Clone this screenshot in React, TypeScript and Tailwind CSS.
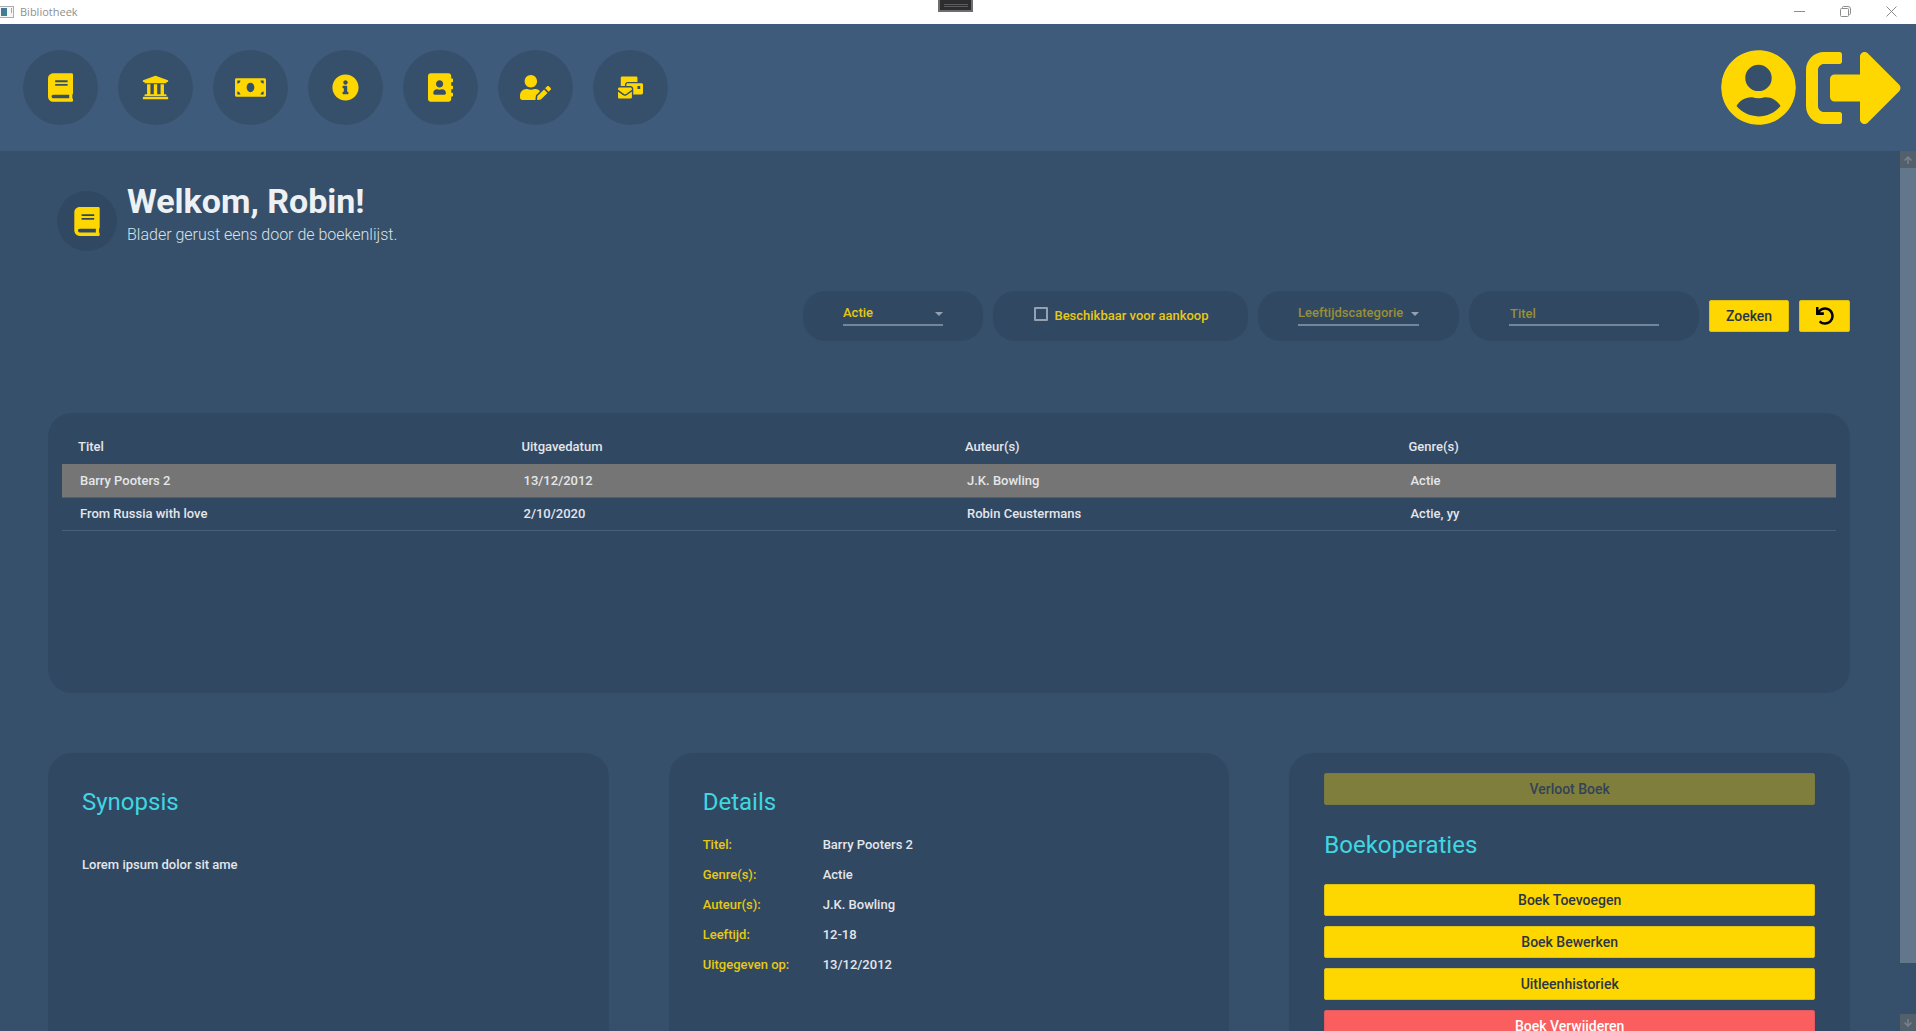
import { useState, type ReactNode } from "react";
import {
  FaAddressBook,
  FaBook,
  FaInfoCircle,
  FaMailBulk,
  FaMoneyBill,
  FaSignOutAlt,
  FaUndo,
  FaUniversity,
  FaUserCircle,
  FaUserEdit,
} from "react-icons/fa";

const navItems = [
  { label: "Boeken", icon: <FaBook className="h-[29px] w-[25px]" /> },
  { label: "Bibliotheek", icon: <FaUniversity className="h-[27px] w-[27px]" /> },
  { label: "Betalingen", icon: <FaMoneyBill className="h-[25px] w-[31px]" /> },
  { label: "Informatie", icon: <FaInfoCircle className="h-[27px] w-[27px]" /> },
  { label: "Contacten", icon: <FaAddressBook className="h-[29px] w-[25px]" /> },
  { label: "Gebruiker bewerken", icon: <FaUserEdit className="h-[25px] w-[31px]" /> },
  { label: "Post", icon: <FaMailBulk className="h-[23px] w-[25px]" /> },
];

const columns = ["Titel", "Uitgavedatum", "Auteur(s)", "Genre(s)"];

const books = [
  ["Barry Pooters 2", "13/12/2012", "J.K. Bowling", "Actie"],
  ["From Russia with love", "2/10/2020", "Robin Ceustermans", "Actie, yy"],
];

const details = [
  ["Titel:", "Barry Pooters 2"],
  ["Genre(s):", "Actie"],
  ["Auteur(s):", "J.K. Bowling"],
  ["Leeftijd:", "12-18"],
  ["Uitgegeven op:", "13/12/2012"],
];

function TitleBar() {
  return (
    <div className="relative flex h-6 shrink-0 items-center justify-between bg-white pr-0.5">
      <div className="flex items-center gap-1.5">
        <svg className="h-3 w-3.5" viewBox="0 0 14 12">
          <rect x="0" y="0" width="14" height="12" fill="#a9adb0" />
          <rect x="0" y="1" width="13" height="10" fill="#f4f6f7" />
          <rect x="1" y="2" width="6" height="8" fill="#3f7f8f" />
          <rect x="1" y="2" width="3" height="4" fill="#4b72a8" />
          <rect x="11" y="2" width="1" height="5" fill="#8bb0b8" />
        </svg>
        <span className="font-['Open_Sans',sans-serif] text-[11px] leading-4 text-[#8f8f8f]">Bibliotheek</span>
      </div>
      <div className="absolute left-[938px] top-0 flex h-3 w-[35px] items-center justify-center border-2 border-t-0 border-[#6e6e6e] bg-[#2d2d30]">
        <span className="h-[3px] w-6 border-y border-[#5d5d5d]" />
      </div>
      <div className="flex h-[23px] self-start text-[#8c8c8c]">
        <button aria-label="Minimaliseren" className="flex w-[46px] items-center justify-center">
          <svg className="h-[11px] w-[11px]" viewBox="0 0 11 11" stroke="currentColor" fill="none">
            <path d="M0 5.5H11" />
          </svg>
        </button>
        <button aria-label="Vorig formaat" className="flex w-[46px] items-center justify-center">
          <svg className="h-[11px] w-[11px]" viewBox="0 0 11 11" stroke="currentColor" fill="none">
            <rect x="0.5" y="2.5" width="8" height="8" rx="1" />
            <path d="M2.5 2.5V1.5Q2.5 .5 3.5 .5H8Q10.5 .5 10.5 3V7.5Q10.5 8.5 9.5 8.5H8.5" />
          </svg>
        </button>
        <button aria-label="Sluiten" className="flex w-[46px] items-center justify-center">
          <svg className="h-[11px] w-[11px]" viewBox="0 0 11 11" stroke="currentColor" fill="none">
            <path d="M.5 .5L10.5 10.5M10.5 .5L.5 10.5" />
          </svg>
        </button>
      </div>
    </div>
  );
}

function Header() {
  return (
    <header className="flex h-[127px] shrink-0 items-center justify-between bg-[#3f5b7b] pl-[23px] pr-3.5">
      <nav className="flex gap-5">
        {navItems.map((item) => (
          <button
            key={item.label}
            aria-label={item.label}
            className="flex size-[75px] items-center justify-center rounded-full bg-[#36506b] text-[#ffd700]"
          >
            {item.icon}
          </button>
        ))}
      </nav>
      <div className="flex items-center gap-2.5 text-[#ffd700]">
        <button aria-label="Profiel" className="flex size-[75px] items-center justify-center rounded-full">
          <FaUserCircle className="h-[77px] w-[75px] shrink-0 rounded-full bg-[radial-gradient(circle,#36506b_60%,transparent_60%)]" />
        </button>
        <button aria-label="Afmelden" className="flex items-center">
          <FaSignOutAlt className="size-24" />
        </button>
      </div>
    </header>
  );
}

function Pill({ children, className }: { children: ReactNode; className: string }) {
  return <div className={`h-[50px] rounded-[22px] bg-[#314863] ${className}`}>{children}</div>;
}

function FilterSelect({ label, options, muted }: { label: string; options: string[]; muted?: boolean }) {
  return (
    <div className="relative">
      <select
        aria-label={label}
        className={`block h-6 w-full appearance-none border-b-2 border-[#75859a] bg-transparent text-[13px] font-medium outline-none ${
          muted ? "text-[#988f35]" : "text-[#e6c814]"
        }`}
      >
        {options.map((o) => (
          <option key={o}>{o}</option>
        ))}
      </select>
      <svg className="pointer-events-none absolute right-0 top-2.5 h-1 w-2" viewBox="0 0 8 4" fill="#94a1b1">
        <path d="M0 0H8L4 4Z" />
      </svg>
    </div>
  );
}

function Filters() {
  const [checked, setChecked] = useState(false);
  return (
    <form className="mt-10 flex items-center justify-end gap-2.5" onSubmit={(e) => e.preventDefault()}>
      <Pill className="w-[180px] px-10 pt-[11px]">
        <FilterSelect label="Genre" options={["Actie", "yy"]} />
      </Pill>
      <Pill className="flex w-[255px] items-center justify-center pl-0.5">
        <label className="flex items-center gap-1.5 text-[13px] font-medium leading-5 text-[#e6c814]">
          <input
            type="checkbox"
            checked={checked}
            onChange={(e) => setChecked(e.target.checked)}
            className="mb-1 size-3.5 appearance-none rounded-[1px] border-2 border-[#94a1b1] checked:bg-[#ffd700]"
          />
          Beschikbaar voor aankoop
        </label>
      </Pill>
      <Pill className="w-[201px] px-10 pt-[11px]">
        <FilterSelect label="Leeftijdscategorie" options={["Leeftijdscategorie", "12-18"]} muted />
      </Pill>
      <Pill className="w-[230px] px-10 pt-[11px]">
        <input
          type="text"
          aria-label="Titel"
          placeholder="Titel"
          className="block h-6 w-full border-b-2 border-[#75859a] bg-transparent pl-px text-[13px] font-medium text-[#e6c814] outline-none placeholder:text-[#988f35]"
        />
      </Pill>
      <button className="h-8 w-20 rounded-xs border border-[#dfc112] bg-[#ffd700] text-sm font-medium text-[#2b3644]">
        Zoeken
      </button>
      <button
        type="reset"
        aria-label="Filters wissen"
        className="flex h-8 w-[51px] items-center justify-center rounded-xs border border-[#dfc112] bg-[#ffd700] text-black"
      >
        <FaUndo className="size-[18px]" />
      </button>
    </form>
  );
}

function BookTable() {
  return (
    <section className="mt-[72px] h-[280px] rounded-3xl bg-[#314863] px-3.5 pt-4 text-[13px] font-medium text-[#e3e6ea]">
      <table className="w-full table-fixed border-collapse text-left">
        <thead>
          <tr className="h-[35px]">
            {columns.map((c) => (
              <th key={c} className="pl-4 font-medium">
                {c}
              </th>
            ))}
          </tr>
        </thead>
        <tbody>
          {books.map((row, i) => (
            <tr key={row[0]} className={`h-[33px] border-b border-[#4b6078] ${i === 0 ? "bg-[#757575]" : ""}`}>
              {row.map((cell) => (
                <td key={cell} className="pl-[18px]">
                  {cell}
                </td>
              ))}
            </tr>
          ))}
        </tbody>
      </table>
    </section>
  );
}

function Card({ children, className }: { children: ReactNode; className: string }) {
  return <section className={`min-h-[400px] rounded-3xl bg-[#314863] ${className}`}>{children}</section>;
}

const cardTitle = "text-2xl leading-8 text-[#40d6e0]";
const cardButton = "block h-8 w-full rounded-xs border text-sm font-medium";
const goldButton = "border-[#dfc112] bg-[#ffd700] text-[#2b3644]";

function Panels() {
  return (
    <div className="mt-[60px] grid grid-cols-3 gap-[60px]">
      <Card className="px-[34px] pt-[33px]">
        <h2 className={cardTitle}>Synopsis</h2>
        <p className="mt-[37px] text-[13px] font-medium leading-5 text-[#e3e6ea]">Lorem ipsum dolor sit ame</p>
      </Card>
      <Card className="px-[34px] pt-[33px]">
        <h2 className={cardTitle}>Details</h2>
        <dl className="mt-3 grid grid-cols-[120px_1fr] text-[13px] font-medium leading-[30px]">
          {details.map(([term, value]) => (
            <div key={term} className="contents">
              <dt className="text-[#e6c814]">{term}</dt>
              <dd className="text-[#e3e6ea]">{value}</dd>
            </div>
          ))}
        </dl>
      </Card>
      <Card className="px-[35px] pt-5">
        <button disabled className={`${cardButton} border-[#777a42] bg-[#807e3d] text-[#324357]`}>
          Verloot Boek
        </button>
        <h2 className={`mt-6 ${cardTitle}`}>Boekoperaties</h2>
        <div className="mt-[23px] flex flex-col gap-2.5">
          <button className={`${cardButton} ${goldButton}`}>Boek Toevoegen</button>
          <button className={`${cardButton} ${goldButton}`}>Boek Bewerken</button>
          <button className={`${cardButton} ${goldButton}`}>Uitleenhistoriek</button>
          <button className={`${cardButton} border-[#dd5b61] bg-[#fa5e5e] text-white`}>Boek Verwijderen</button>
        </div>
      </Card>
    </div>
  );
}

function ScrollArrow({ down }: { down?: boolean }) {
  return (
    <button
      aria-label={down ? "Omlaag schuiven" : "Omhoog schuiven"}
      className="flex h-[17px] w-full shrink-0 items-center justify-center bg-[#53606c] text-[#75828f]"
    >
      <svg
        className={`h-2 w-2 ${down ? "rotate-180" : ""}`}
        viewBox="0 0 8 8"
        fill="none"
        stroke="currentColor"
        strokeWidth="1.5"
      >
        <path d="M4 8V1M.5 4.5L4 1L7.5 4.5" />
      </svg>
    </button>
  );
}

function ScrollBar() {
  return (
    <div className="flex w-4 shrink-0 flex-col">
      <ScrollArrow />
      <div className="flex-1">
        <div className="h-[94%] bg-[#62768c]" />
      </div>
      <ScrollArrow down />
    </div>
  );
}

export default function App() {
  return (
    <div className="flex h-screen flex-col overflow-hidden bg-[#36506b] font-[Roboto,sans-serif]">
      <TitleBar />
      <Header />
      <div className="flex min-h-0 flex-1">
        <main className="min-w-0 flex-1 overflow-hidden pl-12 pr-[50px] pt-[30px]">
          <div className="flex items-start gap-2.5 pl-[9px]">
            <div className="mt-2.5 flex size-[60px] items-center justify-center rounded-full bg-[#314863] text-[#ffd700]">
              <FaBook className="h-[29px] w-[26px]" />
            </div>
            <div>
              <h1 className="text-[34px] font-bold leading-10 text-[#eef1f4]">Welkom, Robin!</h1>
              <p className="mt-0.5 text-base font-light leading-6 text-[#dce1e6]">
                Blader gerust eens door de boekenlijst.
              </p>
            </div>
          </div>
          <Filters />
          <BookTable />
          <Panels />
        </main>
        <ScrollBar />
      </div>
    </div>
  );
}
